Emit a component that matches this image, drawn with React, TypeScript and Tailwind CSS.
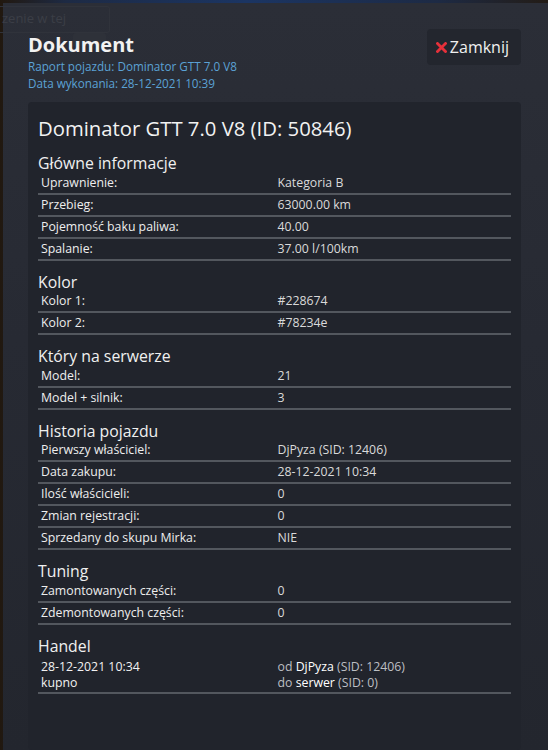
import type { ReactNode } from "react";

type Row = { label: string; value: ReactNode };

const SECTIONS: { title: string; rows: Row[] }[] = [
  {
    title: "Główne informacje",
    rows: [
      { label: "Uprawnienie:", value: "Kategoria B" },
      { label: "Przebieg:", value: "63000.00 km" },
      { label: "Pojemność baku paliwa:", value: "40.00" },
      { label: "Spalanie:", value: "37.00 l/100km" },
    ],
  },
  {
    title: "Kolor",
    rows: [
      { label: "Kolor 1:", value: "#228674" },
      { label: "Kolor 2:", value: "#78234e" },
    ],
  },
  {
    title: "Który na serwerze",
    rows: [
      { label: "Model:", value: "21" },
      { label: "Model + silnik:", value: "3" },
    ],
  },
  {
    title: "Historia pojazdu",
    rows: [
      { label: "Pierwszy właściciel:", value: "DjPyza (SID: 12406)" },
      { label: "Data zakupu:", value: "28-12-2021 10:34" },
      { label: "Ilość właścicieli:", value: "0" },
      { label: "Zmian rejestracji:", value: "0" },
      { label: "Sprzedany do skupu Mirka:", value: "NIE" },
    ],
  },
  {
    title: "Tuning",
    rows: [
      { label: "Zamontowanych części:", value: "0" },
      { label: "Zdemontowanych części:", value: "0" },
    ],
  },
];

function SectionTitle({ children }: { children: ReactNode }) {
  return (
    <h3 className="mt-[10.5px] h-[20px] pt-[1.5px] text-[15.8px] leading-[18px] text-[#f0f0f0]">
      {children}
    </h3>
  );
}

function InfoRow({ row }: { row: Row }) {
  return (
    <div className="grid h-[22px] grid-cols-2 border-b-2 border-[#53575e] text-[12.3px] leading-[20px]">
      <div className="px-[3px] text-[#eeeeee]">{row.label}</div>
      <div className="px-[3px] text-[#dadada]">{row.value}</div>
    </div>
  );
}

function CloseIcon() {
  return (
    <svg width="11" height="11" viewBox="0 0 11 11" aria-hidden>
      <path d="M1.5 1.5 L9.5 9.5 M9.5 1.5 L1.5 9.5" stroke="#e5303a" strokeWidth="2.8" strokeLinecap="square" />
    </svg>
  );
}

export default function App() {
  return (
    <div className="relative h-[750px] w-[548px] overflow-hidden bg-[linear-gradient(90deg,#21180f_0%,#1d2a44_12%,#1b3563_45%,#1d2a44_80%,#231c16_100%)] pl-[3px] pt-[3px] font-['Open_Sans',sans-serif]">
      <div className="relative flex h-full flex-col bg-[linear-gradient(180deg,#2b2e37_0%,#272a33_45%,#23262e_100%)] pl-[25px] pr-[27px]">
        {/* faint content from the page behind the panel */}
        <div className="pointer-events-none absolute left-[-9px] top-[3px] h-[27px] w-[116px] rounded-[3px] border border-[#30333b]" />
        <span className="pointer-events-none absolute left-[-1px] top-[6px] text-[13px] leading-[18px] text-[#3b3e46]">
          zenie w tej
        </span>
        <div className="pointer-events-none absolute left-[70px] top-[30px] h-[13px] w-[33px] rounded-t-[3px] bg-[#2e3139]" />

        <header className="relative flex items-start justify-between pt-[26px]">
          <div className="pt-[3px]">
            <h1 className="text-[20px] font-bold leading-[26px] text-[#f2f2f2]">Dokument</h1>
            <p className="text-[11.7px] leading-[17px] text-[#5ba2d5]">
              Raport pojazdu: Dominator GTT 7.0 V8
            </p>
            <p className="text-[11.7px] leading-[17px] text-[#5ba2d5]">
              Data wykonania: 28-12-2021 10:39
            </p>
          </div>
          <button className="flex h-[36px] items-center gap-[3px] rounded-[4px] bg-[#23262e] pl-[9px] pr-[12px] text-[16px] text-[#f0f0f0]">
            <CloseIcon />
            <span>Zamknij</span>
          </button>
        </header>

        <main className="relative mt-[9.5px] flex-1 rounded-[4px] bg-[#21242c] px-[10px] pt-[12.5px]">
          <h2 className="text-[20.3px] leading-[28px] text-[#f2f2f2]">
            Dominator GTT 7.0 V8 (ID: 50846)
          </h2>

          {SECTIONS.map((s) => (
            <section key={s.title}>
              <SectionTitle>{s.title}</SectionTitle>
              {s.rows.map((r) => (
                <InfoRow key={r.label} row={r} />
              ))}
            </section>
          ))}

          <section>
            <SectionTitle>Handel</SectionTitle>
            <div className="grid grid-cols-2 border-b-2 border-[#53575e] pb-[1.5px] pt-[3.5px] text-[12.3px] leading-[16px]">
              <div className="px-[3px] text-[#f2f2f2]">
                <div>28-12-2021 10:34</div>
                <div>kupno</div>
              </div>
              <div className="px-[3px] text-[#bdbfc3]">
                <div>
                  od <span className="text-[#ffffff]">DjPyza</span> (SID: 12406)
                </div>
                <div>
                  do <span className="text-[#ffffff]">serwer</span> (SID: 0)
                </div>
              </div>
            </div>
          </section>
        </main>
      </div>
    </div>
  );
}
